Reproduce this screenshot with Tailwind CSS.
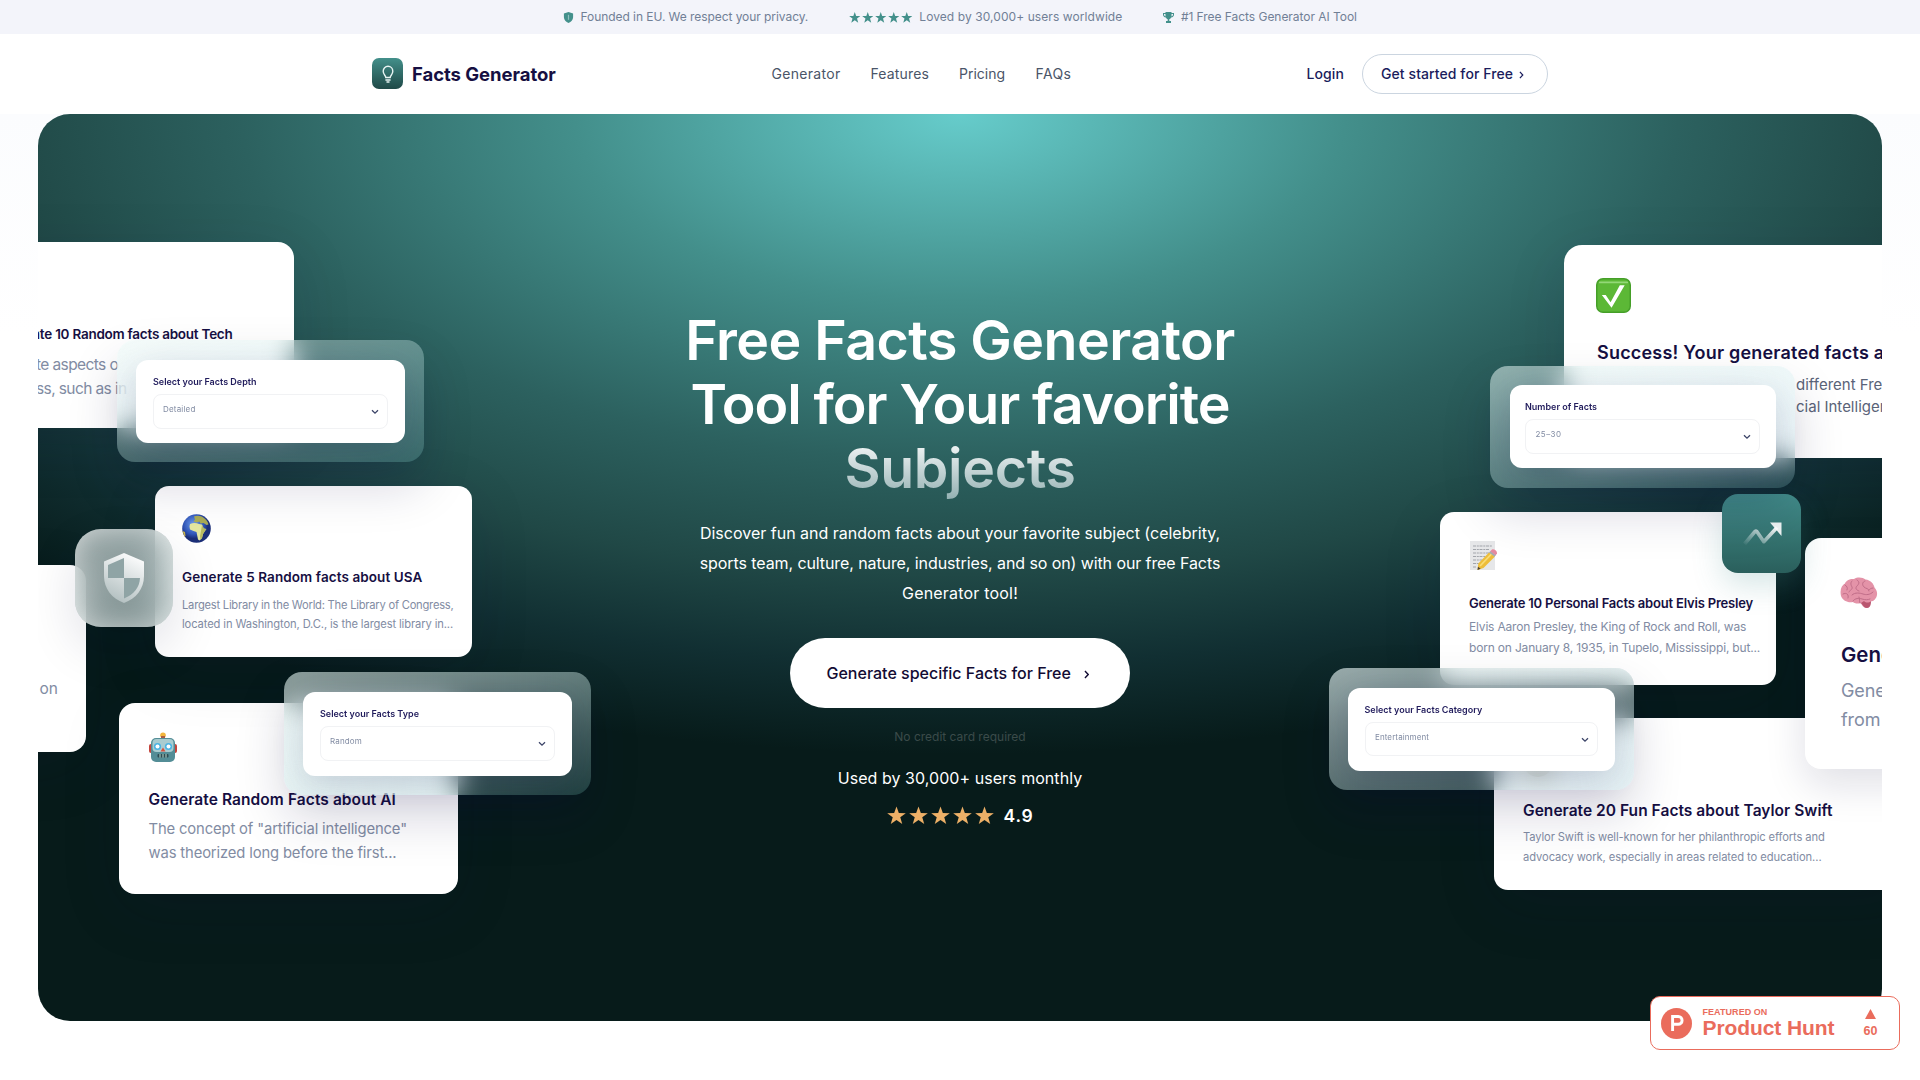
<!DOCTYPE html>
<html lang="en">
<head>
<meta charset="utf-8">
<title>Facts Generator</title>
<script src="https://cdn.jsdelivr.net/npm/@tailwindcss/browser@4"></script>
</head>
<body class="relative h-[1080px] overflow-hidden bg-white font-['Inter',sans-serif] antialiased">
<svg width="0" height="0" class="absolute">
  <defs>
    <symbol id="star" viewBox="0 0 24 23"><path d="M12 0l2.95 8.3 8.8.2-7 5.35 2.5 8.45L12 17.3l-7.25 5 2.5-8.45-7-5.35 8.8-.2z"/></symbol>
    <symbol id="down" viewBox="0 0 8 6"><path d="M1 1.2l3 3 3-3" fill="none" stroke="currentColor" stroke-width="1.3"/></symbol>
    <symbol id="right" viewBox="0 0 6 10"><path d="M1 1.2L4.6 5 1 8.8" fill="none" stroke="currentColor" stroke-width="1.5"/></symbol>
  </defs>
</svg>

<div class="flex h-[34px] items-center justify-center gap-[41px] bg-[#f3f4fa] text-[12px] leading-[16px] text-[#718096]">
  <div class="flex items-center gap-[6.5px]">
    <svg class="h-[11px] w-[11px]" viewBox="0 0 11 11"><path d="M5.5 0l4.6 1.5v3.6c0 3-2 5-4.6 5.9C2.900 10.100.9 8.100.9 5.100V1.500z" fill="#43908b"/><path d="M5.500 2.800v5" stroke="#8fc0bd" stroke-width="1.200"/></svg>
    <span class="tracking-[-0.06px]">Founded in EU. We respect your privacy.</span>
  </div>
  <div class="flex items-center gap-[6.5px]">
    <div class="flex gap-[1.5px] fill-[#43908b]">
      <svg class="h-[11px] w-[11.5px]"><use href="#star"/></svg><svg class="h-[11px] w-[11.5px]"><use href="#star"/></svg><svg class="h-[11px] w-[11.5px]"><use href="#star"/></svg><svg class="h-[11px] w-[11.5px]"><use href="#star"/></svg><svg class="h-[11px] w-[11.5px]"><use href="#star"/></svg>
    </div>
    <span class="tracking-[0.08px]">Loved by 30,000+ users worldwide</span>
  </div>
  <div class="flex items-center gap-[6.5px]">
    <svg class="h-[11px] w-[11px]" viewBox="0 0 11 11"><path d="M2.500 0h6v1H11v1.500C11 4.300 9.800 5.300 8.100 5.500 7.600 6.500 7 7 6.300 7.200V9H8v2H3V9h1.700V7.200C4 7 3.400 6.500 2.900 5.500 1.200 5.300 0 4.300 0 2.500V1h2.500zM1 2v.6c0 .9.500 1.500 1.500 1.800V2zm7.500 0v2.400C9.500 4.100 10 3.500 10 2.600V2z" fill="#43908b"/></svg>
    <span class="tracking-[-0.04px]">#1 Free Facts Generator AI Tool</span>
  </div>
</div>

<header class="mx-auto flex h-20 w-[1176px] items-center pb-px">
  <div class="flex w-[399.500px] items-center gap-[9px]">
    <div class="flex h-[31px] w-[31px] items-center justify-center rounded-[7px] bg-linear-to-b from-[#43908b] to-[#204a48]">
      <svg class="h-[18px] w-[14px]" viewBox="0 0 14 18" fill="none" stroke="#e8f4f3" stroke-width="1.400" stroke-linecap="round"><path d="M4.800 12.500c0-2-2.600-2.800-2.600-6.200C2.200 3.400 4.300 1.300 7 1.300s4.800 2.100 4.800 5c0 3.400-2.600 4.200-2.600 6.200z"/><path d="M4.900 15h4.200M6 17h2"/></svg>
    </div>
    <span class="text-[18.5px] leading-6 font-bold tracking-[-0.05px] text-[#160f42]">Facts Generator</span>
  </div>
  <nav class="flex items-center text-[14px] leading-5 text-[#4a5568]">
    <a class="w-[99px] tracking-[0.3px]">Generator</a>
    <a class="w-[88.5px] tracking-[0.15px]">Features</a>
    <a class="w-[76.500px]">Pricing</a>
    <a class="tracking-[0.4px]">FAQs</a>
  </nav>
  <div class="ml-auto flex items-center gap-[18px] text-[14px] leading-5 font-medium text-[#1a1c5c]">
    <a class="tracking-[0.1px]">Login</a>
    <a class="flex h-10 w-[186px] items-center gap-[6px] rounded-full border border-[#cbd5e0] pl-[18px]"><span class="tracking-[0.08px]">Get started for Free</span><svg class="mt-[2px] h-[8px] w-[5px]"><use href="#right"/></svg></a>
  </div>
</header>

<main class="h-[220px] bg-linear-to-b from-[#fbfcfe] to-white px-[38px]">
  <section class="relative flex h-[907px] w-[1844px] flex-col items-center overflow-hidden rounded-[32px] bg-[radial-gradient(1330px_640px_at_50%_0%,#66cccb_0%,#438f8b_29%,#2c615f_54%,#204846_72%,#112f32_86%,#071b1a_100%)] pt-[194px] text-center text-white">

    <div class="absolute top-[-114px] left-[-38px] h-[1080px] w-[1920px] text-left font-normal whitespace-nowrap">
      <!-- left cluster -->
      <div class="absolute top-[565px] left-[-200px] flex h-[187px] w-[286px] flex-col items-end rounded-[16px] bg-white pt-[114px] pr-[28px] text-[15.500px] leading-[20px] text-[#828ca3] shadow-[0_16px_60px_rgba(12,20,60,0.130)]">on</div>
      <div class="absolute top-[703px] left-[119px] flex h-[191px] w-[338.500px] flex-col rounded-[16px] bg-white pt-[29px] pl-[29.500px] shadow-[0_16px_60px_rgba(12,20,60,0.130)]">
        <svg class="h-[31px] w-[28px]" viewBox="0 0 28 31"><rect x="0" y="12" width="28" height="9" rx="2" fill="#c5443c"/><circle cx="14" cy="3.200" r="2.800" fill="#f2b53c"/><rect x="12" y="4" width="4" height="4" fill="#aa5d43"/><rect x="2" y="6" width="24" height="24" rx="5" fill="#538d96"/><rect x="3.500" y="7" width="21" height="13" rx="4" fill="#a9ccd0"/><circle cx="8.500" cy="14.500" r="3.600" fill="#4bb3e2"/><circle cx="19.500" cy="14.500" r="3.600" fill="#4bb3e2"/><circle cx="8.500" cy="14.500" r="2" fill="#fff"/><circle cx="19.500" cy="14.500" r="2" fill="#fff"/><path d="M14 15.500l2.500 4h-5z" fill="#d8523f"/><rect x="8.500" y="22" width="11" height="3.600" rx="1" fill="#2c4b52"/><path d="M11 22v3.600M14 22v3.600M17 22v3.600" stroke="#dfe" stroke-width=".8"/></svg>
        <b class="mt-[27px] text-[15.500px] leading-[20px] font-semibold tracking-[0.080px] text-[#160f42]">Generate Random Facts about AI</b>
        <span class="mt-[7px] text-[14.800px] leading-[24px] tracking-[-0.140px] text-[#828ca3]">The concept of "artificial intelligence"<br>was theorized long before the first...</span>
      </div>
      <div class="absolute top-[242px] left-[-80px] h-[186px] w-[373.500px] rounded-[16px] bg-white shadow-[0_16px_60px_rgba(12,20,60,0.130)]">
        <b class="absolute top-[82px] right-[61px] text-[13.500px] leading-[20px] font-semibold tracking-[-0.250px] text-[#160f42]">Generate 10 Random facts about Tech</b>
        <p class="absolute top-[111px] left-[116px] text-[15.500px] leading-[23.500px] tracking-[-0.600px] text-[#828ca3]">te aspects o<br>ss, such as in</p>
      </div>
      <div class="absolute top-[486px] left-[155px] flex h-[171px] w-[317px] flex-col rounded-[14px] bg-white pt-[28px] pl-[27px] shadow-[0_16px_60px_rgba(12,20,60,0.130)]">
        <svg class="h-[29px] w-[29px]" viewBox="0 0 29 29"><defs><radialGradient id="sea" cx=".4" cy=".35"><stop offset="0" stop-color="#6f9ff0"/><stop offset=".7" stop-color="#3156b8"/><stop offset="1" stop-color="#1c2f78"/></radialGradient></defs><circle cx="14.500" cy="14.500" r="14.300" fill="url(#sea)"/><path d="M12 2.500c3-1.500 7-1 10 1.500 2.500 2 4 4 4.500 6.500l-2 .5-3-2-3 .5-1-2-3 1-3-1 1.500-2z" fill="#a9aa55"/><path d="M8 10c3-1.500 6-1.500 9 0l3 .5 1.500 4 2.500.5-3 5-1 4-2.500 2.500-1.500-1-1.500-7.500-3-1-3.500-1.500-.5-3z" fill="#e3e6a0"/><path d="M20 11l2 3.500 2.500.5-3.500 5-1 4-1.500 2-.5-4 1-5z" fill="#b9bb60"/><path d="M.5 17l2.500 1 .5 4-1 .5z" fill="#c9b34f"/></svg>
        <b class="mt-[23.500px] text-[13.500px] leading-[20px] font-semibold tracking-[0.090px] text-[#160f42]">Generate 5 Random facts about USA</b>
        <span class="mt-[9px] text-[11.200px] leading-[19.500px] tracking-[-0.240px] text-[#828ca3]">Largest Library in the World: The Library of Congress,<br><span class="tracking-[-0.120px]">located in Washington, D.C., is the largest library in...</span></span>
      </div>

      <div class="absolute top-[529px] left-[75px] flex h-[98px] w-[98px] items-center justify-center rounded-[26px] bg-linear-to-br from-[#c9d3d3]/75 to-[#9fb1b1]/80 shadow-[inset_0_0_26px_rgba(255,255,255,0.550),0_20px_50px_rgba(12,14,60,0.120)] backdrop-blur-[16px]">
        <svg class="h-[50px] w-[42px]" viewBox="0 0 42 50"><defs><linearGradient id="sh" x1=".8" y1="0" x2=".4" y2="1"><stop offset="0" stop-color="#fff"/><stop offset="1" stop-color="#b3c0c1"/></linearGradient></defs><path d="M21 0l20 8.500V23c0 13-8 22.500-20 27C9 45.500 1 36 1 23V8.500z" fill="url(#sh)"/><path d="M21 5v20H5V12zM21 25h16c-.5 9.500-6 16.500-16 20.500z" fill="#8fa4a5"/></svg>
      </div>

      <div class="absolute top-[340px] left-[117px] h-[122px] w-[307px] rounded-[18px] bg-linear-165 from-[#e6f6f4]/45 to-[#8fd3dc]/22 p-[19.500px] pl-[19px] shadow-[0_24px_50px_rgba(18,14,70,0.160)] backdrop-blur-[14px]">
        <div class="h-[83px] rounded-[12px] bg-white px-[17px] pt-[16px] shadow-[0_10px_36px_rgba(18,14,70,0.180)]">
          <p class="text-[9px] leading-[12px] font-semibold text-[#211c5c]">Select your Facts Depth</p>
          <div class="mt-[6px] flex h-[35px] justify-between rounded-[8px] border border-[#f1f2f4] pr-[8px] pl-[9px] pt-[8px] text-[8px] leading-[12px] text-[#828ca3]"><span class="tracking-[0.180px]">Detailed</span><svg class="mt-[6px] h-[6px] w-[8px] text-[#3c4468]"><use href="#down"/></svg></div>
        </div>
      </div>
      <div class="absolute top-[672px] left-[284px] h-[123px] w-[307px] rounded-[18px] bg-linear-165 from-[#e4f4f1]/60 to-[#7cc8cc]/22 p-[19.500px] pl-[19px] shadow-[0_24px_50px_rgba(18,14,70,0.160)] backdrop-blur-[14px]">
        <div class="h-[84px] rounded-[12px] bg-white px-[17px] pt-[16px] shadow-[0_10px_36px_rgba(18,14,70,0.180)]">
          <p class="text-[9px] leading-[12px] font-semibold text-[#211c5c]">Select your Facts Type</p>
          <div class="mt-[6px] flex h-[35px] justify-between rounded-[8px] border border-[#f1f2f4] pr-[8px] pl-[9px] pt-[8px] text-[8px] leading-[12px] text-[#828ca3]"><span class="tracking-[0.160px]">Random</span><svg class="mt-[6px] h-[6px] w-[8px] text-[#3c4468]"><use href="#down"/></svg></div>
        </div>
      </div>

      <!-- right cluster -->
      <div class="absolute top-[245px] left-[1564px] flex h-[213px] w-[420px] flex-col rounded-[18px] bg-white pt-[33px] pl-[32px] shadow-[0_16px_60px_rgba(12,20,60,0.130)]">
        <svg class="h-[35px] w-[35px]" viewBox="0 0 36 36"><rect x=".75" y=".75" width="34.500" height="34.500" rx="6.500" fill="#5cb836" stroke="#459f28" stroke-width="1.500"/><path d="M4 4.500h28" stroke="#93d877" stroke-width="2" stroke-linecap="round"/><path d="M6 17.500h4l5 7.500L24.500 7.500h5L16 30.500z" fill="#fff"/></svg>
        <b class="mt-[28px] ml-px text-[18px] leading-[24px] font-semibold tracking-[0.200px] text-[#160f42]">Success! Your generated facts are ready</b>
        <p class="mt-[9px] ml-[200px] text-[15px] leading-[22px] text-[#5a6378]">different Free<br>cial Intelligence</p>
      </div>
      <div class="absolute top-[512px] left-[1440px] flex h-[172.500px] w-[336px] flex-col rounded-[14px] bg-white pt-[28px] pl-[29px] shadow-[0_16px_60px_rgba(12,20,60,0.130)]">
        <svg class="h-[31px] w-[28px]" viewBox="0 0 28 31"><path d="M1 1h25v29H1z" fill="#e6e7e9"/><path d="M4 6h19M4 9.500h16M4 13h18M4 16.500h13M4 20h10M4 23.500h6M4 27h3" stroke="#a2a5ab" stroke-width="1.200" stroke-dasharray="3 .8 2 .7"/><path d="M20 12.500l6 4L14.500 28 8.500 30l.8-6.500z" fill="#edbd3a"/><path d="M22.500 14L11 26" stroke="#f9dc76" stroke-width="1.800"/><path d="M21 11.500l2-2c2-1 5.500 1.500 5 4l-1.500 2z" fill="#e58aa0"/><path d="M20 12.500l1.300-1.300 5.500 4-1.300 1.500z" fill="#a7a9ad"/><path d="M8.500 30l.5-3.300 2.600 2z" fill="#4a4036"/></svg>
        <b class="mt-[22px] text-[13px] leading-[20px] font-semibold tracking-[-0.190px] text-[#160f42]">Generate 10 Personal Facts about Elvis Presley</b>
        <span class="mt-[4px] text-[12px] leading-[20.500px] tracking-[-0.180px] text-[#828ca3]">Elvis Aaron Presley, the King of Rock and Roll, was<br>born on January 8, 1935, in Tupelo, Mississippi, but...</span>
      </div>
      <div class="absolute top-[718px] left-[1494px] flex h-[172px] w-[420px] flex-col rounded-[14px] bg-white pt-[29px] pl-[29px] shadow-[0_16px_60px_rgba(12,20,60,0.130)]">
        <div class="h-[30px] w-[30px] rounded-full bg-[#b5ad95]"></div>
        <b class="mt-[24px] text-[15.500px] leading-[20px] font-semibold tracking-[0.040px] text-[#160f42]">Generate 20 Fun Facts about Taylor Swift</b>
        <span class="mt-[7px] text-[11.200px] leading-[19.500px] tracking-[-0.120px] text-[#828ca3]">Taylor Swift is well-known for her philanthropic efforts and<br><span class="tracking-[-0.075px]">advocacy work, especially in areas related to education...</span></span>
      </div>
      <div class="absolute top-[538px] left-[1805px] flex h-[231px] w-[400px] flex-col rounded-[16px] bg-white pt-[39px] pl-[35px] shadow-[0_16px_40px_rgba(12,14,60,0.130)]">
        <svg class="h-[32px] w-[38px]" viewBox="0 0 38 32"><path d="M1 19C-.5 12 2 8 5 6.500 6 3.500 10 1.500 14 2c4-2.500 9-1.500 11.500.5 5 .5 8 4 9 8 3 3 3.500 8 1 11-1 2-3 3-5 3 0 3-1 6.500-4 6.500s-4-2.500-6-5c-3 1-6 .5-7.500-1-5 1-10-1-12-6z" fill="#e493a8"/><path d="M5 8c2 1 3 3 2 5M12 4c-2 2-1 4 0 6s-2 3-3 5M17 3c3 2 2 4 0 6s-1 4 2 5M25 4c-3 1-3 4-1 6s5 1 5 4M3 17c4-2 6 1 5 4M12 18c3-3 8-2 11-1s7 1 10-2M13 24c2-3 6-3 9-2s6 1 8 0M19 20c1 3 0 4 1 6M33 11c-2 0-3 1-4 2" fill="none" stroke="#c06d88" stroke-width="1" stroke-linecap="round"/><path d="M24 24c2 2 5 2 7 0 0 4-1 7-4 7s-4-3-6-5z" fill="#b9566f"/></svg>
        <b class="mt-[32px] ml-px text-[20.500px] leading-[28px] font-semibold text-[#160f42]">Generate</b>
        <span class="mt-[7px] ml-px text-[18px] leading-[29px] tracking-[-0.100px] text-[#828ca3]">Generate<br>from any</span>
      </div>

      <div class="absolute top-[494px] left-[1722px] flex h-[79px] w-[79px] items-center justify-center rounded-[16px] bg-linear-to-b from-[#438f8b] to-[#2a5f5c] shadow-[0_12px_30px_rgba(67,143,139,0.220)]">
        <svg class="ml-[3px] h-[24px] w-[40px]" viewBox="0 0 40 24"><defs><linearGradient id="tr" x1="0" y1="1" x2="1" y2="0"><stop offset="0" stop-color="#fff" stop-opacity=".05"/><stop offset="1" stop-color="#fff"/></linearGradient></defs><path d="M1.500 22L12 9.500c.6-.6 1.200-.6 1.800 0l7 10.200L34 5.500" fill="none" stroke="url(#tr)" stroke-width="3.600" stroke-linejoin="round"/><path d="M27 .5h11.500V14z" fill="#fff" fill-opacity=".92"/></svg>
      </div>

      <div class="absolute top-[365.500px] left-[1490px] h-[122px] w-[305px] rounded-[18px] bg-linear-165 from-[#e6f6f4]/55 to-[#8fc8dc]/20 p-[19.500px] shadow-[0_24px_50px_rgba(18,14,70,0.160)] backdrop-blur-[14px]">
        <div class="h-[83px] rounded-[12px] bg-white px-[15.500px] pt-[16px] shadow-[0_10px_36px_rgba(18,14,70,0.180)]">
          <p class="text-[9px] leading-[12px] font-semibold text-[#211c5c]">Number of Facts</p>
          <div class="mt-[6px] flex h-[34.500px] justify-between rounded-[8px] border border-[#f1f2f4] pr-[8px] pl-[9.500px] pt-[8px] text-[8px] leading-[12px] text-[#828ca3]"><span class="tracking-[0.450px]">25–30</span><svg class="mt-[6px] h-[6px] w-[8px] text-[#3c4468]"><use href="#down"/></svg></div>
        </div>
      </div>
      <div class="absolute top-[668px] left-[1329px] h-[122px] w-[305px] rounded-[18px] bg-linear-165 from-[#e4f2f2]/65 to-[#a0cdd8]/28 p-[19.500px] pl-[19px] shadow-[0_24px_50px_rgba(18,14,70,0.160)] backdrop-blur-[14px]">
        <div class="h-[83px] rounded-[12px] bg-white px-[16.500px] pt-[16px] shadow-[0_10px_36px_rgba(18,14,70,0.180)]">
          <p class="text-[9px] leading-[12px] font-semibold text-[#211c5c]">Select your Facts Category</p>
          <div class="mt-[6px] flex h-[34px] justify-between rounded-[8px] border border-[#f1f2f4] pr-[8px] pl-[9.500px] pt-[8px] text-[8px] leading-[12px] text-[#828ca3]"><span class="tracking-[0.100px]">Entertainment</span><svg class="mt-[6px] h-[6px] w-[8px] text-[#3c4468]"><use href="#down"/></svg></div>
        </div>
      </div>
    </div>

    <h1 class="relative text-[55.500px] leading-[64px] font-semibold whitespace-nowrap">
      <span class="block tracking-[-0.550px]">Free Facts Generator</span>
      <span class="block tracking-[-1.050px]">Tool for Your favorite</span>
      <span class="block bg-linear-to-b from-white to-[#93b0b2] bg-clip-text tracking-[-0.360px] text-transparent">Subjects</span>
    </h1>
    <p class="relative mt-[18px] text-[16px] leading-[30px] whitespace-nowrap"><span class="block">Discover fun and random facts about your favorite subject (celebrity,</span><span class="block tracking-[-0.090px]">sports team, culture, nature, industries, and so on) with our free Facts</span><span class="block tracking-[0.200px]">Generator tool!</span></p>
    <a class="relative mt-[30px] flex h-[70px] w-[340px] items-center gap-[13px] rounded-full bg-white pl-[36.500px] text-[16px] leading-6 font-medium text-[#120b33]">Generate specific Facts for Free<svg class="mt-[3px] h-[9px] w-[5.500px]"><use href="#right"/></svg></a>
    <p class="relative mt-[18.500px] text-[12px] leading-[20px] text-[#3b4b4a]">No credit card required</p>
    <p class="relative mt-[19.500px] text-[16px] leading-[24px] tracking-[0.050px]">Used by 30,000+ users monthly</p>
    <div class="relative mt-[13.500px] flex h-6 items-center">
      <div class="flex gap-[3px] fill-[#edb067]">
        <svg class="h-[19px] w-[19px]"><use href="#star"/></svg><svg class="h-[19px] w-[19px]"><use href="#star"/></svg><svg class="h-[19px] w-[19px]"><use href="#star"/></svg><svg class="h-[19px] w-[19px]"><use href="#star"/></svg><svg class="h-[19px] w-[19px]"><use href="#star"/></svg>
      </div>
      <span class="ml-[10px] text-[17.500px] leading-6 font-semibold tracking-[0.700px]">4.9</span>
    </div>
  </section>
</main>

<a class="absolute top-[996px] left-[1650px] flex h-[54px] w-[250px] items-center rounded-[10px] border border-[#ea6c5c] bg-white font-['Liberation_Sans',sans-serif] font-bold text-[#ea6c5c]">
  <span class="ml-[10px] flex h-[31px] w-[31px] items-center justify-center rounded-full bg-[#ea6c5c]"><svg class="ml-[1px] h-[16px] w-[13px]" viewBox="0 0 13 16"><path d="M1.600 16V1.500h5.600a3.900 3.900 0 0 1 0 7.800H1.600" fill="none" stroke="#fff" stroke-width="2.900"/></svg></span>
  <span class="ml-[10.500px] flex w-[161px] flex-col">
    <span class="text-[9px] leading-[10px] tracking-[0.050px]">FEATURED ON</span>
    <span class="mt-[-1px] text-[21px] leading-[24px] tracking-[-0.080px]">Product Hunt</span>
  </span>
  <span class="flex flex-col items-center gap-[5px]">
    <svg class="h-[10px] w-[11px]" viewBox="0 0 11 10"><path d="M5.500 0L11 10H0z" fill="#ea6c5c"/></svg>
    <span class="text-[12.500px] leading-[14px]">60</span>
  </span>
</a>
</body>
</html>
